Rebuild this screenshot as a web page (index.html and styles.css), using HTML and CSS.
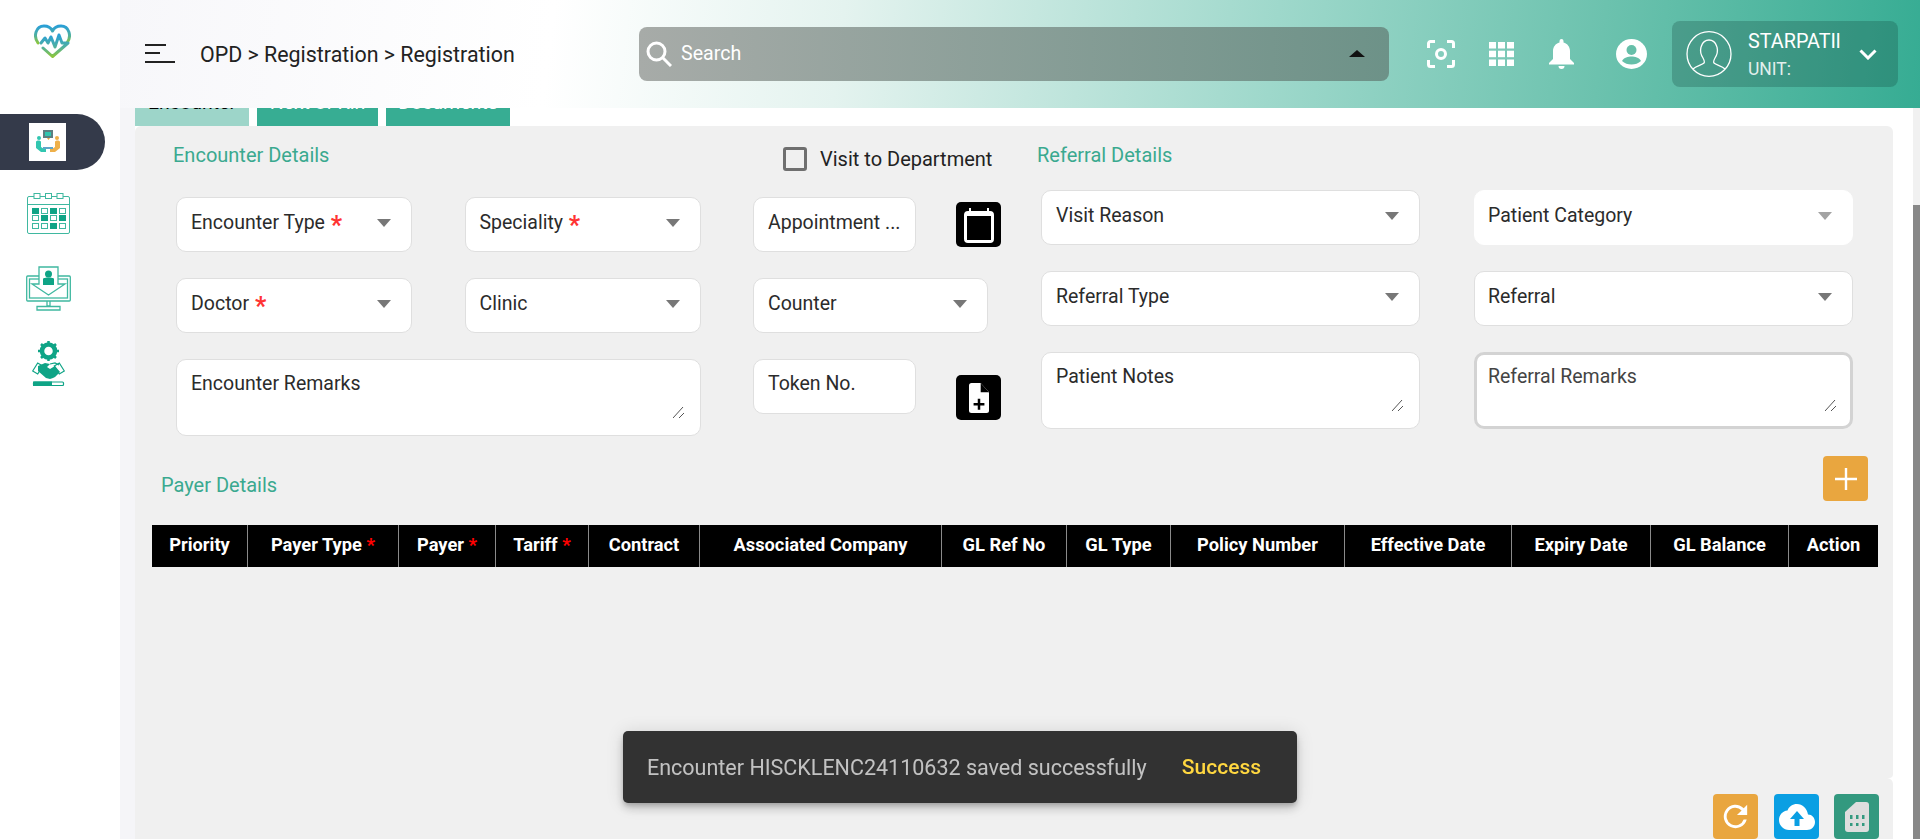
FILE: index.html
```html
<!DOCTYPE html>
<html lang="en">
<head>
<meta charset="utf-8">
<title>OPD Registration</title>
<link rel="stylesheet" href="styles.css">
</head>
<body>
<div class="app">
  <aside class="sidebar">
    <svg class="logo" viewBox="0 0 37 34" fill="none" stroke-width="3" stroke-linecap="round" stroke-linejoin="round">
      <defs><linearGradient id="lg" x1="0" y1="0" x2="0" y2="1"><stop offset="0" stop-color="#2a9fd6"/><stop offset=".55" stop-color="#4fb0a0"/><stop offset="1" stop-color="#8cc63f"/></linearGradient></defs>
      <path stroke="url(#lg)" d="M4 19C-1 12 2 2 10 2c4 0 7 2 8.500 5C20 4 23 2 27 2c8 0 11 10 6 17"/>
      <path stroke="url(#lg)" d="M9 24l9.500 8.500L34 19h-6l-3-8-4 12-4-10-3 6-3-5-4 5"/>
    </svg>
    <nav class="nav">
      <a class="nav-item nav-active">
        <span class="nav-tile">
          <svg class="nav-tile-icon" viewBox="0 0 26 26">
            <rect x="8" y="1" width="10" height="8" fill="#5d7f80"/><rect x="10" y="3" width="6" height="4" fill="#31c6b0"/><path d="M12 9h3l-1.500 2z" fill="#e8a33d"/>
            <circle cx="4" cy="9" r="2" fill="#31c6b0"/><circle cx="22" cy="9" r="2" fill="#eeb04a"/>
            <path d="M1 13c0-2 5-2 5 0v5l3 2h2v3H6l-5-4z" fill="#31c6b0"/><path d="M25 13c0-2-5-2-5 0v5l-3 2h-2v3h5l5-4z" fill="#eeb04a"/>
            <rect x="8" y="18" width="10" height="2" fill="#5fa6c9"/>
          </svg>
        </span>
      </a>
      <a class="nav-item">
        <svg class="nav-cal" viewBox="0 0 43 41" fill="none" stroke="#3fb8a0">
          <rect x=".5" y="3.500" width="42" height="37" rx="1.500"/><path d="M.5 11.500h42"/>
          <rect x="7" y=".5" width="6" height="5" fill="#fff"/><rect x="18.500" y=".5" width="6" height="5" fill="#fff"/><rect x="30" y=".5" width="6" height="5" fill="#fff"/>
          <g fill="#0fa486" stroke="none"><rect x="5" y="15" width="7" height="6"/><rect x="23" y="15" width="7" height="6"/><rect x="14" y="22" width="7" height="6"/><rect x="32" y="22" width="7" height="6"/><rect x="23" y="30" width="7" height="6"/></g>
          <g><rect x="14.500" y="15.500" width="6" height="5"/><rect x="32.500" y="15.500" width="6" height="5"/><rect x="5.500" y="22.500" width="6" height="5"/><rect x="23.500" y="22.500" width="6" height="5"/><rect x="5.500" y="30.500" width="6" height="5"/><rect x="14.500" y="30.500" width="6" height="5"/><rect x="32.500" y="30.500" width="6" height="5"/></g>
        </svg>
      </a>
      <a class="nav-item">
        <svg class="nav-mon" viewBox="0 0 45 45" fill="none" stroke="#3fb8a0" stroke-width="1.300">
          <rect x=".7" y="10" width="43.600" height="25" rx="1"/><rect x="3.500" y="13" width="38" height="19"/>
          <path d="M13 1h19v17h7L22.500 29 6 18h7z" fill="#fff"/>
          <path d="M21 35v5h3v-5M11 40.500h23V44H11z"/>
          <circle cx="22.500" cy="8" r="3.500" fill="#0fa486" stroke="none"/><path d="M17 19v-6c0-1 3-1.500 5.500-1.500S28 12 28 13v6z" fill="#0fa486" stroke="none"/>
        </svg>
      </a>
      <a class="nav-item">
        <svg class="nav-hand" viewBox="0 0 33 45" fill="none" stroke="#0fa486">
          <circle cx="16.500" cy="10" r="6.500" stroke-width="4.500"/>
          <path d="M16.500 0v3M16.500 17v3M6 10h3M24 10h3M9 3l2 2M22 15l2 2M9 17l2-2M22 5l2-2" stroke-width="2.500"/>
          <path d="M.7 30l5-8 5 3-5 8z" fill="#fff" stroke-width="1.200"/><path d="M32.300 30l-5-8-5 3 5 8z" fill="#fff" stroke-width="1.200"/>
          <path d="M6 25l7-3 5 1-3 3 3 2 5-3 5 6-5 5-2 1-3 1-4-1-8-7z" fill="#0fa486" stroke="none"/>
          <path d="M18 23l5-1 4 2M23 28l4 3M20 31l3 3M17 34l3 2" stroke-width="1.200"/>
          <rect x="1.500" y="41" width="30" height="3.500" rx="1" fill="#fff" stroke-width="1.200"/><rect x="1.500" y="41" width="18" height="3.500" fill="#0fa486"/>
        </svg>
      </a>
    </nav>
  </aside>

  <main class="main">
    <header class="topbar">
      <button class="menu-btn" aria-label="Menu"><span class="bar bar-a"></span><span class="bar bar-b"></span><span class="bar bar-c"></span></button>
      <div class="crumbs">OPD &gt; Registration &gt; Registration</div>
      <div class="search">
        <svg class="search-icon" viewBox="0 0 26 26" fill="none" stroke="#fff" stroke-width="3"><circle cx="10.500" cy="10.500" r="8.500"/><path d="M17 17l8 8"/></svg>
        <span class="search-text">Search</span>
        <span class="search-caret"></span>
      </div>
      <div class="tools">
        <svg class="tool tool-focus" viewBox="0 0 28 28" fill="none" stroke="#fff" stroke-width="3"><path d="M1.500 8V3.500a2 2 0 0 1 2-2H8M20 1.500h4.500a2 2 0 0 1 2 2V8M26.500 20v4.500a2 2 0 0 1-2 2H20M8 26.500H3.500a2 2 0 0 1-2-2V20"/><circle cx="14" cy="14" r="4.500"/></svg>
        <svg class="tool tool-grid" viewBox="0 0 25 24" fill="#fff"><rect width="7" height="6.500"/><rect x="9" width="7" height="6.500"/><rect x="18" width="7" height="6.500"/><rect y="8.700" width="7" height="6.500"/><rect x="9" y="8.700" width="7" height="6.500"/><rect x="18" y="8.700" width="7" height="6.500"/><rect y="17.500" width="7" height="6.500"/><rect x="9" y="17.500" width="7" height="6.500"/><rect x="18" y="17.500" width="7" height="6.500"/></svg>
        <svg class="tool tool-bell" viewBox="0 0 25 30" fill="#fff"><path d="M12.500 0a2 2 0 0 1 2 2v1.500c4 1 6.500 4.500 6.500 8.500v8l4 4v1.500H0V24l4-4v-8c0-4 2.500-7.500 6.500-8.500V2a2 2 0 0 1 2-2z"/><path d="M9.500 27h6a3 3 0 0 1-6 0z"/></svg>
        <svg class="tool tool-acct" viewBox="0 0 31 30"><ellipse cx="15.500" cy="15" rx="15.500" ry="15" fill="#fff"/><circle cx="15.500" cy="11" r="5" fill="#66bfa9"/><path d="M6 22c2-3.500 6-4.500 9.500-4.500S23 18.500 25 22c-2.500 2.500-6 3.500-9.500 3.500S8.500 24.500 6 22z" fill="#66bfa9"/></svg>
      </div>
      <div class="userbox">
        <svg class="avatar" viewBox="0 0 46 46" fill="none" stroke="#fff" stroke-width="1.300"><ellipse cx="23" cy="23" rx="22" ry="22.300"/><path d="M7 38c3-3 9-4 11-6 1-1 0-3-1-5-2-3-3-7-2-11 1-5 5-7 8-7s7 2 8 7c1 4 0 8-2 11-1 2-2 4-1 5 2 2 8 3 11 6"/></svg>
        <div class="user-text"><div class="user-name">STARPATIl</div><div class="user-unit">UNIT:</div></div>
        <svg class="chev" viewBox="0 0 18 11" fill="none" stroke="#fff" stroke-width="3"><path d="M1.500 1.500L9 9l7.500-7.500"/></svg>
      </div>
    </header>

    <div class="content">
      <div class="tabs">
        <div class="tab tab-on">Encounter</div>
        <div class="tab tab-b">Next of Kin</div>
        <div class="tab tab-c">Documents</div>
      </div>

      <section class="panel">
        <div class="forms">
          <div class="enc">
            <div class="enc-head">
              <h2 class="title enc-title">Encounter Details</h2>
              <label class="visit"><span class="check"></span>Visit to Department</label>
            </div>
            <div class="enc-grid">
              <div class="field"><span class="lbl">Encounter Type <b class="req">*</b></span><i class="caret"></i></div>
              <div class="field"><span class="lbl">Speciality <b class="req">*</b></span><i class="caret"></i></div>
              <div class="cell-split">
                <div class="field field-s"><span class="lbl">Appointment ...</span></div>
                <button class="sq-btn" aria-label="Calendar"><svg viewBox="0 0 32 36" class="sq-cal"><path d="M6 1h2v3h16V1h2v3h1a4 4 0 0 1 4 4v24a4 4 0 0 1-4 4H5a4 4 0 0 1-4-4V8a4 4 0 0 1 4-4h1z" fill="#fff"/><rect x="4" y="9" width="24" height="24" fill="#000"/></svg></button>
              </div>
              <div class="field"><span class="lbl">Doctor <b class="req">*</b></span><i class="caret"></i></div>
              <div class="field"><span class="lbl">Clinic</span><i class="caret"></i></div>
              <div class="field field-counter"><span class="lbl">Counter</span><i class="caret"></i></div>
              <div class="field field-area span2"><span class="lbl">Encounter Remarks</span><svg class="grip" viewBox="0 0 12 12"><path d="M0 11L10 0M6 11l5-5" stroke="#555" fill="none"/></svg></div>
              <div class="cell-split">
                <div class="field field-s field-token"><span class="lbl">Token No.</span></div>
                <button class="sq-btn sq-low" aria-label="Add document"><svg viewBox="0 0 24 36" class="sq-doc"><path d="M3 0h11l10 11v22a3 3 0 0 1-3 3H3a3 3 0 0 1-3-3V3a3 3 0 0 1 3-3z" fill="#fff"/><path d="M14 0v11h10z" fill="#000"/><path d="M10.500 19h3v5h5v3h-5v5h-3v-5h-5v-3h5z" fill="#000"/></svg></button>
              </div>
            </div>
          </div>
          <div class="ref">
            <h2 class="title ref-title">Referral Details</h2>
            <div class="ref-grid">
              <div class="field"><span class="lbl">Visit Reason</span><i class="caret"></i></div>
              <div class="field field-plain field-alt"><span class="lbl">Patient Category</span><i class="caret caret-soft"></i></div>
              <div class="field"><span class="lbl">Referral Type</span><i class="caret"></i></div>
              <div class="field field-alt"><span class="lbl">Referral</span><i class="caret"></i></div>
              <div class="field field-area"><span class="lbl">Patient Notes</span><svg class="grip" viewBox="0 0 12 12"><path d="M0 11L10 0M6 11l5-5" stroke="#555" fill="none"/></svg></div>
              <div class="field field-area field-focus"><span class="lbl">Referral Remarks</span><svg class="grip" viewBox="0 0 12 12"><path d="M0 11L10 0M6 11l5-5" stroke="#555" fill="none"/></svg></div>
            </div>
          </div>
        </div>

        <div class="payer-head">
          <h2 class="title payer-title">Payer Details</h2>
          <button class="add-btn" aria-label="Add"><svg viewBox="0 0 22 22" class="add-icon"><path d="M9.800 0h2.400v9.800H22v2.400h-9.800V22H9.800v-9.800H0V9.800h9.800z" fill="#fff"/></svg></button>
        </div>

        <div class="thead">
          <div class="th">Priority</div>
          <div class="th">Payer Type <b class="star">*</b></div>
          <div class="th">Payer <b class="star">*</b></div>
          <div class="th">Tariff <b class="star">*</b></div>
          <div class="th">Contract</div>
          <div class="th">Associated Company</div>
          <div class="th">GL Ref No</div>
          <div class="th">GL Type</div>
          <div class="th">Policy Number</div>
          <div class="th">Effective Date</div>
          <div class="th">Expiry Date</div>
          <div class="th">GL Balance</div>
          <div class="th">Action</div>
        </div>
      </section>

      <footer class="actions">
        <button class="act act-orange" aria-label="Refresh"><svg viewBox="0 0 24 24" class="act-icon"><path d="M17.650 6.350A8 8 0 1 0 19.700 14h-2.100a6 6 0 1 1-1.400-6.200L13 11h7V4z" fill="#fff"/></svg></button>
        <button class="act act-blue" aria-label="Upload"><svg viewBox="0 0 36 26" class="act-cloud"><path d="M29 10.500C28 4.500 23.500 0 18 0c-4.500 0-8 2.500-9.500 6.500C3.500 7 0 11 0 16c0 5.500 4.500 10 10 10h18c4.500 0 8-3.500 8-8 0-4-3-7.500-7-7.500z" fill="#fff"/><path d="M18 7l7 8h-4.500v7h-5v-7H11z" fill="#0a9fe3"/></svg></button>
        <button class="act act-green" aria-label="SIM"><svg viewBox="0 0 24 30" class="act-sim"><path d="M11 0h10a3 3 0 0 1 3 3v24a3 3 0 0 1-3 3H3a3 3 0 0 1-3-3V10z" fill="#dedede"/><g fill="#33997f"><rect x="5" y="13" width="2.500" height="4"/><rect x="11" y="13" width="2.500" height="4"/><rect x="17" y="13" width="2.500" height="4"/><rect x="5" y="21" width="2.500" height="3"/><rect x="11" y="21" width="2.500" height="3"/><rect x="17" y="21" width="2.500" height="3"/></g></svg></button>
      </footer>
    </div>
  </main>
  <div class="scrollbar"><div class="thumb"></div></div>
</div>
<div class="toast"><span class="toast-msg">Encounter HISCKLENC24110632 saved successfully</span><span class="toast-act">Success</span></div>
</body>
</html>
```
FILE: styles.css
```css
* { box-sizing: border-box; }
html, body { margin: 0; height: 100%; overflow: hidden; background: #fff; }
body { font-family: Roboto, "Liberation Sans", sans-serif; font-size: 19.5px; color: #222; }
button { border: 0; padding: 0; font: inherit; }
h2 { margin: 0; font-weight: 400; }

.app { display: flex; height: 839px; }

.sidebar { width: 120px; flex: none; background: #fff; display: flex; flex-direction: column; position: relative; z-index: 3; }
.logo { width: 37px; height: 34px; margin: 24px 0 0 34px; display: block; }
.nav { margin-top: 56px; display: flex; flex-direction: column; }
.nav-item { display: flex; align-items: center; }
.nav-active { width: 105px; height: 56px; background: #343a4a; border-radius: 0 28px 28px 0; margin-bottom: 23px; }
.nav-tile { width: 37px; height: 38px; margin-left: 29px; background: #fff; display: flex; align-items: center; justify-content: center; }
.nav-tile-icon { width: 26px; height: 26px; }
.nav-cal { width: 43px; height: 41px; margin-left: 27px; margin-bottom: 32px; }
.nav-mon { width: 45px; height: 45px; margin-left: 26px; margin-bottom: 30px; }
.nav-hand { width: 33px; height: 45px; margin-left: 32px; }

.main { width: 1793px; flex: none; display: flex; flex-direction: column; background: #fff; }

.topbar { height: 108px; flex: none; display: flex; align-items: center; padding-left: 25px; position: relative; z-index: 2;
  background: linear-gradient(97deg, #f7f7fa 0, #fff 24%, #e4f3ef 40%, #9ed8cb 64%, #6cc2ae 82%, #36ac93 100%); margin-right: -7px; }
.menu-btn { width: 30px; height: 20px; background: none; position: relative; display: flex; flex-direction: column; gap: 6px; margin-right: 25px; }
.bar { display: block; height: 2px; background: #222; }
.bar-a { width: 21px; }
.bar-b { width: 15px; }
.bar-c { width: 30px; margin-top: 1px; }
.crumbs { width: 439px; font-size: 21.4px; color: #222; }
.search { width: 750px; height: 54px; margin-top: -1px; border-radius: 8px; display: flex; align-items: center; padding: 0 24px 0 7px;
  background: linear-gradient(90deg, #a7aba8, #6d9288); }
.search-icon { width: 26px; height: 26px; margin-left: 0; }
.search-text { color: #fff; font-size: 19.6px; margin-left: 9px; flex: 1; }
.search-caret { width: 0; height: 0; border-left: 8px solid transparent; border-right: 8px solid transparent; border-bottom: 7px solid #111; }
.tools { display: flex; align-items: center; width: 283px; padding-left: 38px; }
.tool { display: block; }
.tool-focus { width: 28px; height: 28px; margin-right: 34px; }
.tool-grid { width: 25px; height: 24px; margin-right: 35px; }
.tool-bell { width: 25px; height: 30px; margin-right: 42px; }
.tool-acct { width: 31px; height: 30px; }
.userbox { width: 226px; height: 66px; border-radius: 8px; background: rgba(10, 60, 50, .25); display: flex; align-items: center; padding-left: 14px; margin-top: 0; }
.avatar { width: 46px; height: 46px; }
.user-text { margin-left: 16px; width: 111px; color: #fff; padding-top: 2px; }
.user-name { font-size: 19.8px; line-height: 22px; }
.user-unit { font-size: 17.5px; line-height: 22px; margin-top: 5px; opacity: .85; }
.chev { width: 18px; height: 11px; }

.content { flex: 1; min-height: 0; overflow: hidden; display: flex; flex-direction: column; border-left: 15px solid #f5f5f8; padding-right: 20px; }

.tabs { display: flex; gap: 8px; height: 18px; align-items: flex-end; flex: none; }
.tab { height: 50px; flex: none; margin-top: -32px; padding-top: 16px; font-size: 19.5px; line-height: 22px; text-align: center; color: #fff; background: #37ad93; }
.tab-on { width: 114px; color: #000; background: #9dd5c9; }
.tab-b { width: 121px; }
.tab-c { width: 124px; }

.panel { height: 652px; flex: none; background: #f0f0f0; border-radius: 6px 6px 4px 0; }
.forms { display: flex; }
.title { font-size: 20px; line-height: 22px; color: #3aa98f; }

.enc { width: 866px; flex: none; padding-left: 41px; }
.enc-head { height: 71px; position: relative; display: flex; padding-top: 18px; }
.enc-title { margin-left: -3px; width: 610px; flex: none; }
.visit { display: flex; align-items: center; height: 24px; margin-top: 3px; font-size: 20px; color: #222; }
.check { width: 24px; height: 24px; border: 3px solid #6f6f6f; border-radius: 3px; margin-right: 13px; }
.enc-grid { display: grid; grid-template-columns: 236px 236px 248px; column-gap: 52.5px; row-gap: 26px; grid-template-rows: 55px 55px 77px; }
.span2 { grid-column: span 2; }

.ref { flex: none; width: 812px; margin-left: 40px; }
.ref-title { height: 64px; padding-top: 18px; margin-left: -4px; }
.ref-grid { display: grid; grid-template-columns: 379px 379px; column-gap: 54px; row-gap: 26px; grid-template-rows: 55px 55px 77px; }

.field { position: relative; background: #fff; border: 1px solid #dfdfdf; border-radius: 10px; padding: 13px 14px; height: 55px; font-size: 19.5px; line-height: 24px; color: #2b2b2b; }
.field-s { width: 163px; white-space: nowrap; }
.field-token { padding-top: 12px; }
.field-counter { width: 235px; }
.field-area { height: 77px; padding-top: 12px; }
.field-alt { padding-left: 13px; }
.field-plain { border-color: #fff; }
.field-focus { border: 3px solid #d3d3d3; padding: 10px 11px; color: #444; }
.req { color: #f33; font-size: 25px; line-height: 0; vertical-align: -5px; font-weight: 700; margin-left: 1px; }
.caret { position: absolute; right: 20px; top: 21px; width: 0; height: 0; border-left: 7px solid transparent; border-right: 7px solid transparent; border-top: 8px solid #777; }
.caret-soft { border-top-color: #a3a3a3; }
.grip { position: absolute; right: 15px; bottom: 16px; width: 12px; height: 12px; }
.field-focus .grip { right: 13px; bottom: 14px; }

.cell-split { display: flex; justify-content: space-between; align-items: flex-start; position: relative; }
.sq-btn { width: 45px; height: 45px; margin-top: 5px; background: #000; border-radius: 5px; display: flex; align-items: center; justify-content: center; }
.sq-low { margin-top: 16px; }
.sq-cal { width: 32px; height: 36px; }
.sq-doc { width: 24px; height: 30px; }

.payer-head { display: flex; justify-content: space-between; margin-top: 20px; padding: 0 25px 0 26px; }
.payer-title { margin-top: 18px; }
.add-btn { width: 45px; height: 45px; background: #e9a63f; border-radius: 4px; display: flex; align-items: center; justify-content: center; }
.add-icon { width: 22px; height: 22px; }

.thead { display: grid; grid-template-columns: 96px 151px 97px 93px 111px 242px 125px 104px 174px 167px 139px 138px 89px; width: 1726px; height: 42px; margin: 24px 0 0 17px; background: #000; }
.th { display: flex; align-items: center; justify-content: center; padding-bottom: 3px; color: #fff; font-size: 18.3px; font-weight: 700; border-right: 1px solid #8a8a8a; white-space: pre; }
.th:last-child { border-right: 0; }
.star { color: #f00; }

.actions { height: 61px; flex: none; background: #f0f0f0; border-radius: 0 6px 0 0; display: flex; justify-content: flex-end; align-items: flex-end; gap: 15px; padding-right: 14px; margin-top: 0; }
.act { width: 45px; height: 45px; border-radius: 4px; display: flex; align-items: center; justify-content: center; }
.act-orange { background: #e9a63f; margin-right: 1px; }
.act-blue { background: #0a9fe3; }
.act-green { background: #33997f; }
.act-icon { width: 35px; height: 35px; }
.act-cloud { width: 36px; height: 26px; }
.act-sim { width: 24px; height: 30px; }

.scrollbar { width: 7px; flex: none; background: #f1f1f1; position: relative; z-index: 4; margin-top: 108px; }
.thumb { height: 634px; margin-top: 97px; background: #888; }

.toast { position: fixed; left: 50%; bottom: 36px; transform: translateX(-50%); width: 674px; height: 72px; z-index: 10; display: flex; align-items: center; justify-content: space-between; padding: 0 36px 0 24px; background: #323232; border-radius: 5px; box-shadow: 0 3px 5px -1px rgba(0,0,0,.2), 0 6px 10px rgba(0,0,0,.14), 0 1px 18px rgba(0,0,0,.12); }
.toast-msg { color: rgba(255,255,255,.7); font-size: 21.5px; }
.toast-act { color: #ffd740; font-size: 21px; font-weight: 500; }
```
